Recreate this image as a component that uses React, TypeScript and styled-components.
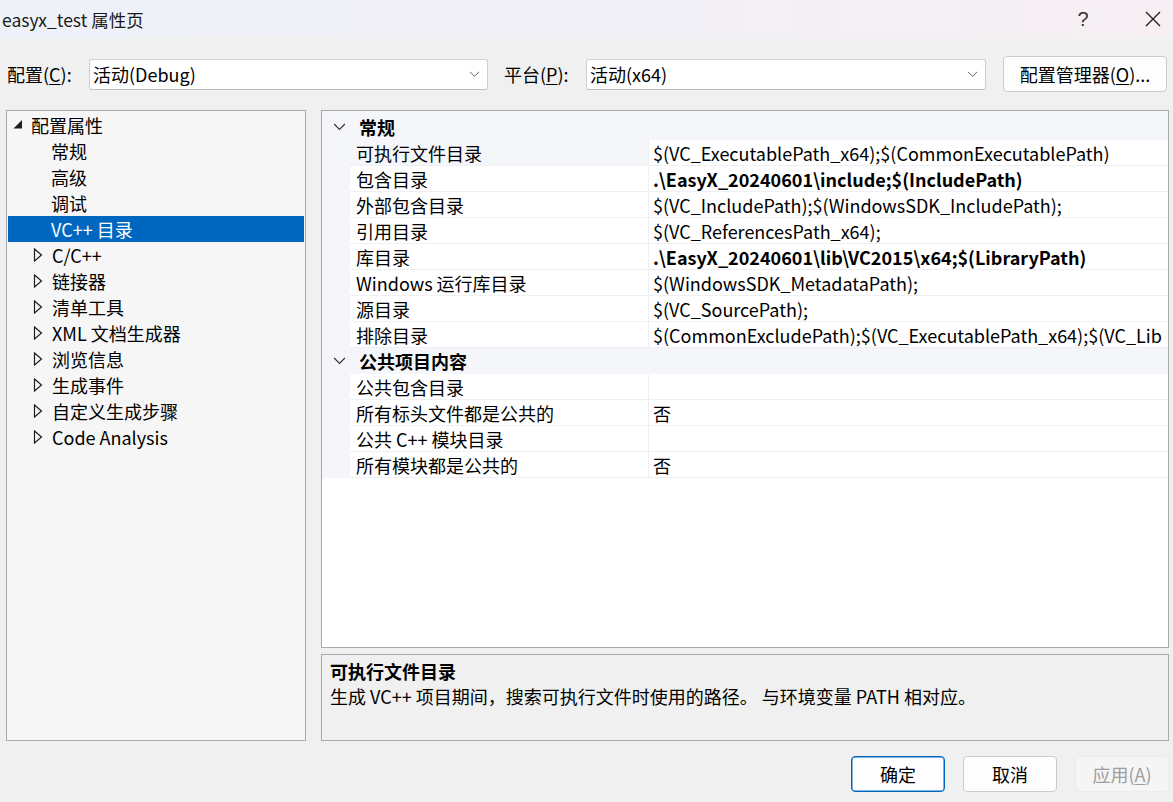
import React from "react"
import styled, { createGlobalStyle } from "styled-components"

const FONT = `"Noto Sans CJK SC", "Noto Sans", sans-serif`

const GlobalStyle = createGlobalStyle`
    html, body {
        margin: 0;
        padding: 0;
        background: #f0f0f0;
    }
    body {
        font-family: ${FONT};
        font-size: 18px;
        color: #000;
    }
`

const Window = styled.div`
    width: 1173px;
    height: 802px;
    display: flex;
    flex-direction: column;
    background: #f0f0f0;
    overflow: hidden;
`

const TitleBar = styled.div`
    height: 38px;
    flex: none;
    display: flex;
    align-items: center;
    background: linear-gradient(90deg, #eef1f8 0%, #f2f0f6 60%, #f7eff3 100%);
`

const Title = styled.div`
    flex: 1;
    padding-left: 2px;
    font-size: 17.5px;
    color: #1a1a1a;
`

const HelpButton = styled.div`
    width: 46px;
    height: 38px;
    display: flex;
    align-items: center;
    justify-content: center;
    font-family: "Liberation Sans", sans-serif;
    font-size: 20px;
    color: #333;
`

const CloseButton = styled.div`
    width: 16px;
    height: 38px;
    margin: 0 12px 0 39px;
    display: flex;
    align-items: center;
`

const ConfigRow = styled.div`
    height: 72px;
    flex: none;
    display: flex;
    align-items: center;
    padding: 0 6px 0 7px;
    box-sizing: border-box;
`

const FieldLabel = styled.label<{ $width: number }>`
    width: ${p => p.$width}px;
    flex: none;
    font-size: 18px;
`

const Combo = styled.div<{ $width: number }>`
    width: ${p => p.$width}px;
    height: 31px;
    flex: none;
    box-sizing: border-box;
    display: flex;
    align-items: center;
    padding: 0 7px 0 3px;
    background: #fff;
    border: 1px solid #cfcfcf;
    border-bottom-color: #bdbdbd;
    border-radius: 3px;
    font-size: 18px;
`

const ComboText = styled.span`
    flex: 1;
`

const Accel = styled.span`
    text-decoration: underline;
    text-underline-offset: 2px;
`

const PushButton = styled.button<{ $width: number; $primary?: boolean; $disabled?: boolean }>`
    width: ${p => p.$width}px;
    height: 36px;
    flex: none;
    box-sizing: border-box;
    font-family: ${FONT};
    font-size: 18px;
    padding: 0;
    border-radius: 4px;
    background: ${p => (p.$disabled ? "#f5f5f5" : "#fdfdfd")};
    color: ${p => (p.$disabled ? "#9d9d9d" : "#000")};
    border: 1px solid ${p => (p.$primary ? "#0067c0" : p.$disabled ? "#ececec" : "#cccccc")};
    box-shadow: ${p => (p.$primary ? "inset 0 0 0 0.5px #0067c0" : "none")};
`

const Main = styled.div`
    height: 631px;
    flex: none;
    display: flex;
    gap: 15px;
    padding: 0 4px 0 6px;
`

const TreePanel = styled.div`
    width: 300px;
    flex: none;
    box-sizing: border-box;
    border: 1px solid #a9a9a9;
    background: #f6f6f6;
    padding: 1px;
`

const TreeRow = styled.div<{ $indent: number; $selected?: boolean }>`
    height: 26px;
    display: flex;
    align-items: center;
    padding-left: ${p => p.$indent}px;
    background: ${p => (p.$selected ? "#0067c0" : "transparent")};
    color: ${p => (p.$selected ? "#fff" : "#000")};
    font-size: 18px;
    white-space: nowrap;
`

const Twisty = styled.span`
    width: 19px;
    flex: none;
    display: flex;
    align-items: center;
`

const RightColumn = styled.div`
    flex: 1;
    min-width: 0;
    display: flex;
    flex-direction: column;
    gap: 6px;
`

const Grid = styled.div`
    height: 538px;
    flex: none;
    box-sizing: border-box;
    border: 1px solid #a9a9a9;
    background: #fff;
    overflow: hidden;
`

const CategoryRow = styled.div<{ $top?: boolean }>`
    height: ${p => (p.$top ? 29 : 26)}px;
    box-sizing: border-box;
    padding-top: ${p => (p.$top ? 3 : 0)}px;
    display: flex;
    align-items: center;
    background: #f4f6fa;
    font-weight: 700;
    font-size: 18px;
`

const CategoryToggle = styled.span`
    width: 35px;
    flex: none;
    display: flex;
    justify-content: center;
    padding-right: 2px;
`

const PropRow = styled.div`
    height: 26px;
    display: flex;
    background: #f4f6fa;
`

const Margin = styled.div`
    width: 28px;
    flex: none;
`

const NameCell = styled.div<{ $selected?: boolean }>`
    width: 299px;
    flex: none;
    box-sizing: border-box;
    display: flex;
    align-items: center;
    padding-left: 6px;
    background: ${p => (p.$selected ? "#f4f6fa" : "#fff")};
    border-bottom: 1px solid #eef0f3;
    border-right: 1px solid #eef0f3;
    font-size: 18px;
    white-space: nowrap;
`

const ValueCell = styled.div<{ $bold?: boolean }>`
    flex: 1;
    min-width: 0;
    box-sizing: border-box;
    display: flex;
    align-items: center;
    padding-left: 4px;
    background: #fff;
    border-bottom: 1px solid #eef0f3;
    font-size: 18px;
    font-weight: ${p => (p.$bold ? 700 : 400)};
    white-space: nowrap;
    overflow: hidden;
`

const Description = styled.div`
    height: 87px;
    flex: none;
    box-sizing: border-box;
    border: 1px solid #a9a9a9;
    background: #f0f0f0;
    padding: 4px 8px;
`

const DescTitle = styled.div`
    font-weight: 700;
    font-size: 18px;
    line-height: 25px;
`

const DescText = styled.div`
    font-size: 18px;
    line-height: 25px;
    white-space: nowrap;
`

const Footer = styled.div`
    flex: 1;
    display: flex;
    justify-content: flex-end;
    align-items: center;
    gap: 18px;
    padding: 4px 4px 0 0;
`

const Filled = () => (
    <svg width="10" height="9" viewBox="0 0 10 9">
        <path d="M9 0 L9 8.5 L0.5 8.5 Z" fill="#1e1e1e" />
    </svg>
)

const Hollow = () => (
    <svg width="10" height="14" viewBox="0 0 10 14">
        <path d="M1.5 1 L8.5 7 L1.5 13 Z" fill="none" stroke="#1e1e1e" strokeWidth="1.2" />
    </svg>
)

const Chevron = ({ color = "#555", w = 13 }: { color?: string; w?: number }) => (
    <svg width={w} height={w * 0.6} viewBox="0 0 13 8">
        <path d="M1 1 L6.5 6.5 L12 1" fill="none" stroke={color} strokeWidth="1.2" />
    </svg>
)

const CloseIcon = () => (
    <svg width="16" height="16" viewBox="0 0 16 16">
        <path d="M1 1 L15 15 M15 1 L1 15" stroke="#222" strokeWidth="1.4" />
    </svg>
)

const treeItems: { label: string; kind: "root" | "leaf" | "branch"; selected?: boolean }[] = [
    { label: "配置属性", kind: "root" },
    { label: "常规", kind: "leaf" },
    { label: "高级", kind: "leaf" },
    { label: "调试", kind: "leaf" },
    { label: "VC++ 目录", kind: "leaf", selected: true },
    { label: "C/C++", kind: "branch" },
    { label: "链接器", kind: "branch" },
    { label: "清单工具", kind: "branch" },
    { label: "XML 文档生成器", kind: "branch" },
    { label: "浏览信息", kind: "branch" },
    { label: "生成事件", kind: "branch" },
    { label: "自定义生成步骤", kind: "branch" },
    { label: "Code Analysis", kind: "branch" },
]

type Prop = { name: string; value: string; bold?: boolean; selected?: boolean }

const general: Prop[] = [
    { name: "可执行文件目录", value: "$(VC_ExecutablePath_x64);$(CommonExecutablePath)", selected: true },
    { name: "包含目录", value: ".\\EasyX_20240601\\include;$(IncludePath)", bold: true },
    { name: "外部包含目录", value: "$(VC_IncludePath);$(WindowsSDK_IncludePath);" },
    { name: "引用目录", value: "$(VC_ReferencesPath_x64);" },
    { name: "库目录", value: ".\\EasyX_20240601\\lib\\VC2015\\x64;$(LibraryPath)", bold: true },
    { name: "Windows 运行库目录", value: "$(WindowsSDK_MetadataPath);" },
    { name: "源目录", value: "$(VC_SourcePath);" },
    { name: "排除目录", value: "$(CommonExcludePath);$(VC_ExecutablePath_x64);$(VC_Lib" },
]

const publicItems: Prop[] = [
    { name: "公共包含目录", value: "" },
    { name: "所有标头文件都是公共的", value: "否" },
    { name: "公共 C++ 模块目录", value: "" },
    { name: "所有模块都是公共的", value: "否" },
]

const PropRows = ({ items }: { items: Prop[] }) => (
    <>
        {items.map(p => (
            <PropRow key={p.name}>
                <Margin />
                <NameCell $selected={p.selected}>{p.name}</NameCell>
                <ValueCell $bold={p.bold}>{p.value}</ValueCell>
            </PropRow>
        ))}
    </>
)

const App: React.FC = () => {
    return (
        <>
            <GlobalStyle />
            <Window>
                <TitleBar>
                    <Title>easyx_test 属性页</Title>
                    <HelpButton>?</HelpButton>
                    <CloseButton>
                        <CloseIcon />
                    </CloseButton>
                </TitleBar>

                <ConfigRow>
                    <FieldLabel $width={82}>配置(<Accel>C</Accel>):</FieldLabel>
                    <Combo $width={399}>
                        <ComboText>活动(Debug)</ComboText>
                        <Chevron color="#606060" w={11} />
                    </Combo>
                    <FieldLabel $width={82} style={{ marginLeft: 16 }}>平台(<Accel>P</Accel>):</FieldLabel>
                    <Combo $width={400}>
                        <ComboText>活动(x64)</ComboText>
                        <Chevron color="#606060" w={11} />
                    </Combo>
                    <PushButton $width={164} style={{ marginLeft: 17 }}>
                        配置管理器(<Accel>O</Accel>)...
                    </PushButton>
                </ConfigRow>

                <Main>
                    <TreePanel>
                        {treeItems.map(t => (
                            <TreeRow
                                key={t.label}
                                $indent={t.kind === "root" ? 5 : t.kind === "branch" ? 25 : 43}
                                $selected={t.selected}
                            >
                                {t.kind === "root" && (
                                    <Twisty style={{ width: 18, paddingBottom: 2 }}>
                                        <Filled />
                                    </Twisty>
                                )}
                                {t.kind === "branch" && (
                                    <Twisty>
                                        <Hollow />
                                    </Twisty>
                                )}
                                {t.label}
                            </TreeRow>
                        ))}
                    </TreePanel>

                    <RightColumn>
                        <Grid>
                            <CategoryRow $top>
                                <CategoryToggle>
                                    <Chevron color="#333" />
                                </CategoryToggle>
                                常规
                            </CategoryRow>
                            <PropRows items={general} />
                            <CategoryRow>
                                <CategoryToggle>
                                    <Chevron color="#333" />
                                </CategoryToggle>
                                公共项目内容
                            </CategoryRow>
                            <PropRows items={publicItems} />
                        </Grid>
                        <Description>
                            <DescTitle>可执行文件目录</DescTitle>
                            <DescText>生成 VC++ 项目期间，搜索可执行文件时使用的路径。 与环境变量 PATH 相对应。</DescText>
                        </Description>
                    </RightColumn>
                </Main>

                <Footer>
                    <PushButton $width={94} $primary>确定</PushButton>
                    <PushButton $width={94}>取消</PushButton>
                    <PushButton $width={94} $disabled>应用(<Accel>A</Accel>)</PushButton>
                </Footer>
            </Window>
        </>
    )
}

export default App
